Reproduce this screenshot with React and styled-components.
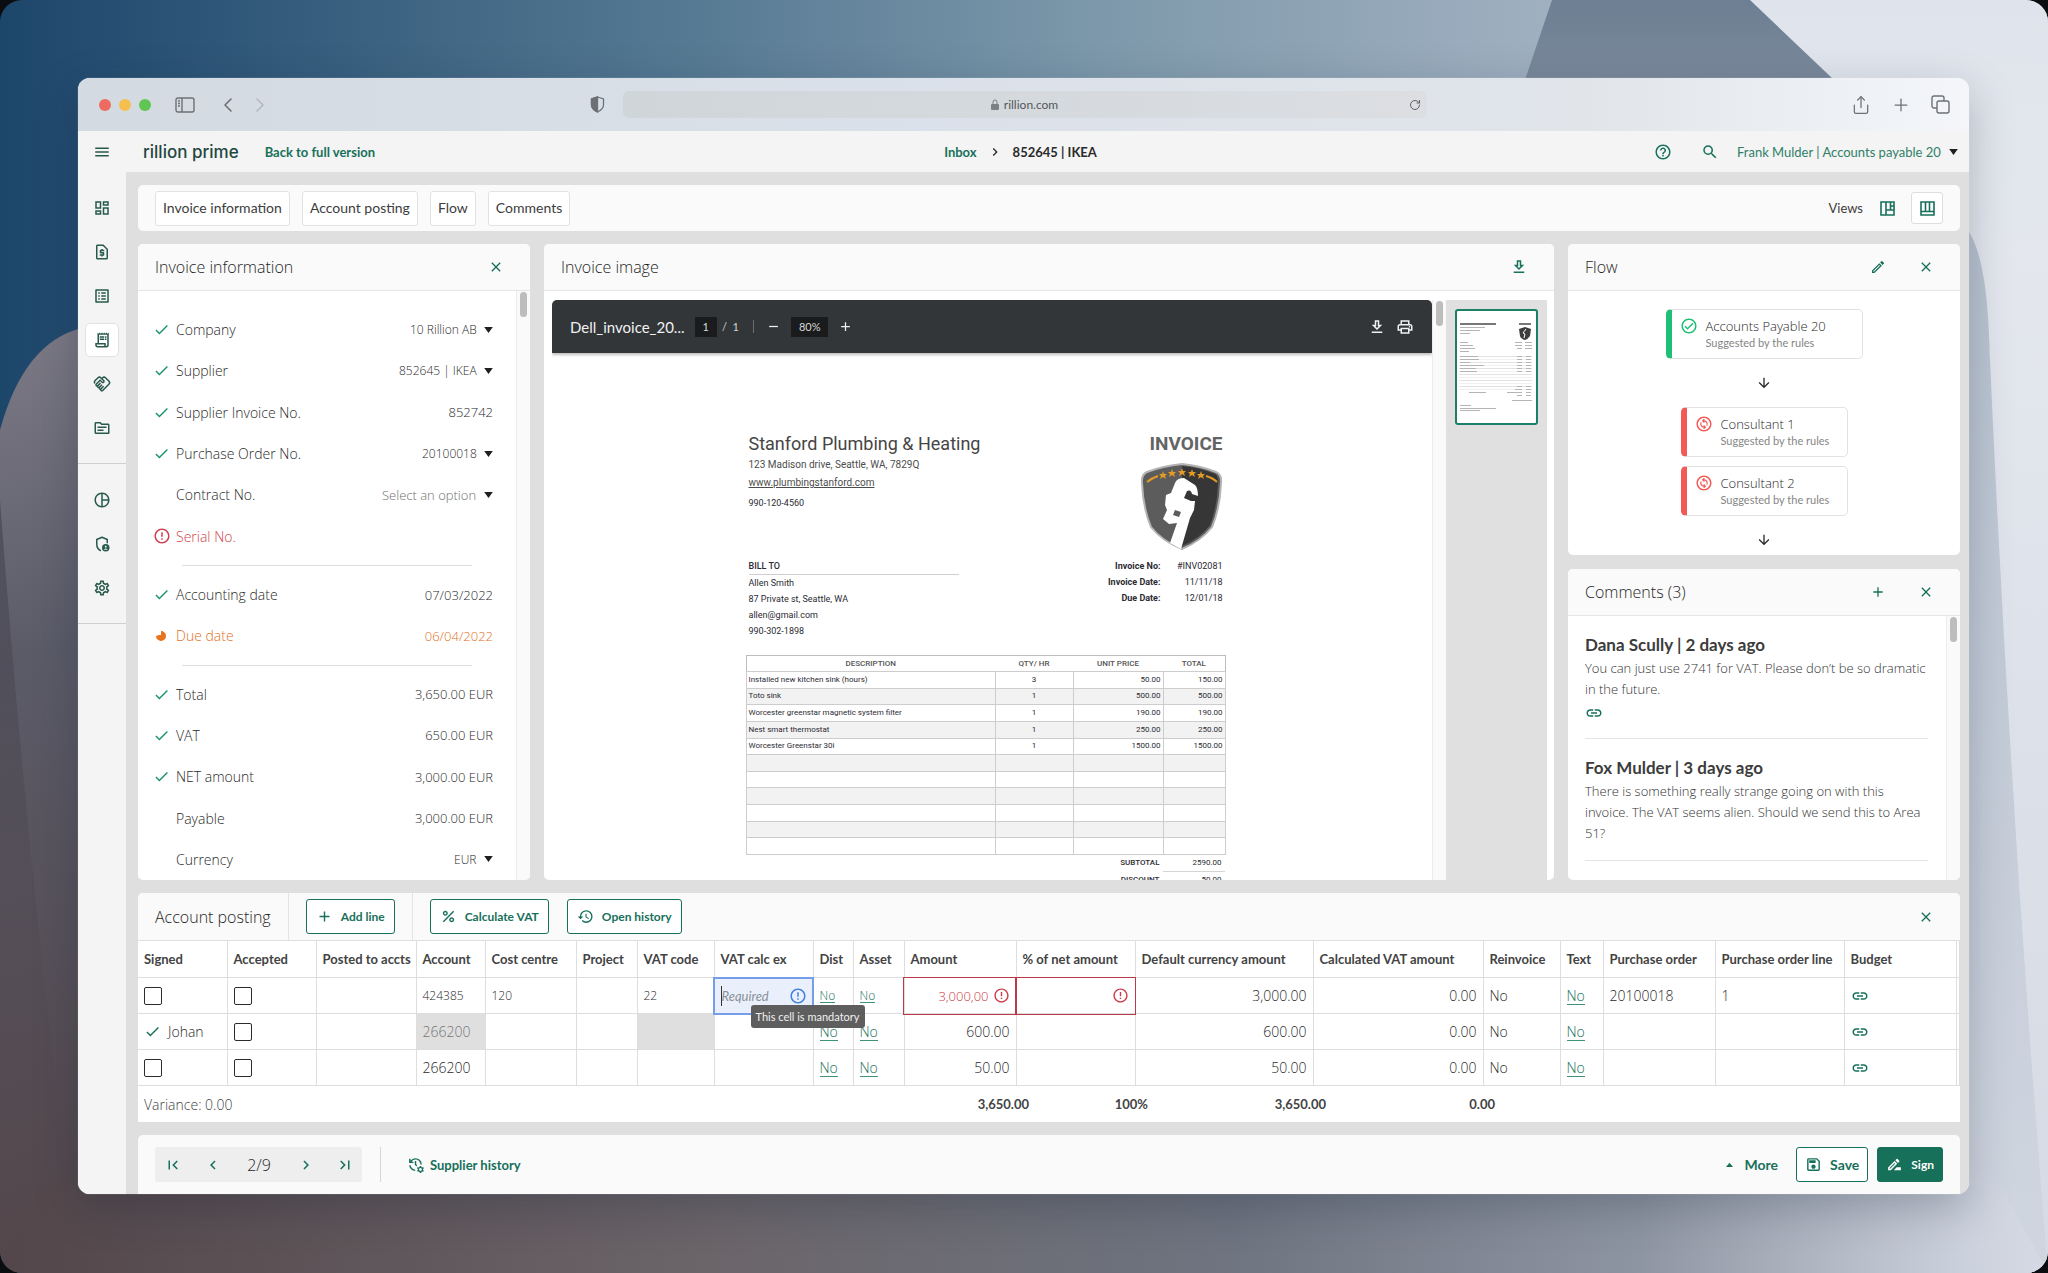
import React, { useState } from "react";
import styled, { createGlobalStyle, css } from "styled-components";
import {
  MdAdd,
  MdArrowDownward,
  MdCheck,
  MdChevronLeft,
  MdChevronRight,
  MdClose,
  MdErrorOutline,
  MdFirstPage,
  MdHelpOutline,
  MdHistory,
  MdLastPage,
  MdLink,
  MdManageHistory,
  MdMenu,
  MdOutlineChangeCircle,
  MdOutlineCheckCircle,
  MdOutlineDashboard,
  MdOutlineDownload,
  MdOutlineDriveFileRenameOutline,
  MdOutlineHandshake,
  MdOutlineListAlt,
  MdOutlineModeEdit,
  MdOutlinePrint,
  MdOutlineReceiptLong,
  MdOutlineRequestPage,
  MdOutlineSave,
  MdOutlineSettings,
  MdOutlineTopic,
  MdPercent,
  MdPieChartOutline,
  MdRemove,
  MdSearch,
} from "react-icons/md";
import { ChevronLeft, ChevronRight, Plus, RotateCw, Share } from "lucide-react";

const lato = `Lato, "Open Sans", sans-serif`;
const green = "#17705a";
const line = "#dedede";

const GlobalStyle = createGlobalStyle`
  * {
    box-sizing: border-box;
  }
  body {
    margin: 0;
    background: #0b0d10;
    color: #2a2a2a;
    font-family: "Open Sans", sans-serif;
    font-size: 14px;
    font-weight: 300;
  }
  button, input, select {
    font: inherit;
    color: inherit;
  }
  h1, h2, h3, p {
    margin: 0;
  }
  svg {
    display: block;
    flex-shrink: 0;
  }
`;

const Desktop = styled.div`
  position: relative;
  display: flex;
  height: 100vh;
  min-height: 960px;
  padding: 78px 79px 79px 78px;
  border-radius: 22px;
  overflow: hidden;
`;

const Wallpaper = styled.svg`
  position: absolute;
  inset: 0;
  width: 100%;
  height: 100%;
`;

const Browser = styled.div`
  position: relative;
  flex: 1;
  min-width: 0;
  display: flex;
  flex-direction: column;
  border-radius: 12px;
  overflow: hidden;
  background: #f4f4f4;
  box-shadow: 0 0 1px rgba(255, 255, 255, 0.8), 0 14px 44px rgba(20, 30, 50, 0.26);
`;

const TitleBar = styled.div`
  display: grid;
  grid-template-columns: 1fr 804px 1fr;
  align-items: center;
  height: 53px;
  padding: 0 19px 0 21px;
  color: #6d7074;
  background: linear-gradient(90deg, #d3dae1, #dbe1ea 45%, #e1e5ea 80%, #f4f6fa);
`;

const TitleSide = styled.div`
  display: flex;
  align-items: center;
  justify-content: ${(p) => (p.$end ? "flex-end" : "flex-start")};
  gap: ${(p) => (p.$end ? "20px" : "8px")};
`;

const Light = styled.span`
  width: 12px;
  height: 12px;
  border-radius: 50%;
  background: ${(p) => p.$color};
`;

const BareButton = styled.button`
  display: flex;
  align-items: center;
  justify-content: center;
  padding: 0;
  border: 0;
  background: none;
  color: ${(p) => p.$color || "inherit"};
  cursor: pointer;
`;

const SidebarToggle = styled(BareButton)`
  margin: 0 13px 0 16px;
`;

const Shield = styled.span`
  margin-left: auto;
  margin-right: 18px;
`;

const UrlBar = styled.div`
  display: grid;
  grid-template-columns: 1fr auto 1fr;
  align-items: center;
  height: 27px;
  padding: 0 6px;
  border-radius: 6px;
  background: linear-gradient(90deg, #cfd6d9, #d6dade 60%, #dcdee2);
  font-family: ${lato};
  font-size: 12px;
  font-weight: 400;
  line-height: 16px;
  color: #54575b;
`;

const Url = styled.span`
  grid-column: 2;
  display: flex;
  align-items: center;
  gap: 5px;
`;

const Reload = styled(BareButton)`
  justify-self: end;
`;

const TopBar = styled.header`
  display: grid;
  grid-template-columns: 1fr auto 1fr;
  align-items: center;
  height: 41px;
  padding: 0 11px 0 15px;
  background: #f4f4f4;
  font-family: ${lato};
`;

const TopGroup = styled.div`
  display: flex;
  align-items: center;
  justify-content: ${(p) => (p.$end ? "flex-end" : "flex-start")};
`;

const Brand = styled.span`
  margin: 0 26px 0 32px;
  font-family: Inter, sans-serif;
  font-size: 17px;
  font-weight: 500;
  line-height: 20px;
  color: #22473f;
`;

const StrongLink = styled.a`
  font-size: 13px;
  font-weight: 700;
  color: ${green};
  text-decoration: none;
`;

const Crumbs = styled.nav`
  display: flex;
  align-items: center;
  gap: 10px;
  padding-right: 10px;
  font-size: 13px;
  font-weight: 700;
`;

const SelectBox = styled.span`
  display: inline-flex;
  align-items: center;
  gap: 7px;
`;

const PlainSelect = styled.select`
  appearance: none;
  padding: 0;
  border: 0;
  background: none;
  font-size: ${(p) => (p.$faded ? "13px" : "12px")};
  color: ${(p) => (p.$faded ? "#707070" : "inherit")};
`;

const UserSelect = styled(SelectBox)`
  margin-left: 18px;
  select {
    font-size: 13px;
    font-weight: 400;
    color: #2f8068;
  }
`;

const HelpButton = styled(BareButton)`
  margin-right: 29px;
`;

const Main = styled.div`
  flex: 1;
  min-height: 0;
  display: flex;
`;

const SideNav = styled.nav`
  width: 48px;
  background: #f4f4f4;
`;

const NavGroup = styled.div`
  display: flex;
  flex-direction: column;
  align-items: center;
  padding: 14px 0 13px;
  border-bottom: 1px solid #cfcfcf;
`;

const NavItem = styled.button`
  display: flex;
  align-items: center;
  justify-content: center;
  width: 34px;
  height: 34px;
  margin: 5px 0;
  padding: 0;
  border: 1px solid ${(p) => (p.$active ? "#e2e2e2" : "transparent")};
  border-radius: 5px;
  background: ${(p) => (p.$active ? "#fff" : "transparent")};
  color: #27594c;
  cursor: pointer;
`;

const Content = styled.main`
  flex: 1;
  min-width: 0;
  display: flex;
  flex-direction: column;
  gap: 13px;
  padding: 13px 9px 0 12px;
  background: #dfdfdf;
`;

const Toolbar = styled.div`
  display: flex;
  align-items: center;
  gap: 12px;
  height: 46px;
  padding: 0 17px;
  border-radius: 5px;
  background: #fafafa;
  font-family: ${lato};
  font-weight: 400;
  color: #3d3d3d;
`;

const Tab = styled.button`
  height: 35px;
  padding: 0 7px;
  border: 1px solid #e2e2e2;
  border-radius: 3px;
  background: #fff;
  font-size: 14px;
  line-height: 16px;
  cursor: pointer;
`;

const Views = styled.div`
  display: flex;
  align-items: center;
  gap: 16px;
  margin-left: auto;
  font-size: 13px;
`;

const ViewButton = styled(BareButton)`
  width: ${(p) => (p.$active ? "32px" : "16px")};
  height: 32px;
  border: ${(p) => (p.$active ? "1px solid #dedede" : "0")};
  border-radius: 3px;
  background: ${(p) => (p.$active ? "#fff" : "none")};
  color: ${green};
`;

const Panels = styled.div`
  flex: 1;
  min-height: 0;
  display: grid;
  grid-template-columns: 392px minmax(0, 1fr) 392px;
  gap: 14px;
`;

const RightColumn = styled.div`
  min-height: 0;
  display: grid;
  grid-template-rows: 1fr 1fr;
  gap: 14px;
`;

const Panel = styled.section`
  min-height: 0;
  display: flex;
  flex-direction: column;
  overflow: hidden;
  border-radius: 5px;
  background: #fff;
`;

const PanelHead = styled.div`
  display: flex;
  align-items: center;
  gap: 32px;
  flex-shrink: 0;
  height: 47px;
  padding: 0 26px 0 17px;
  border-bottom: 1px solid #e6e6e6;
  background: #fafafa;
  color: ${green};
`;

const PanelTitle = styled.h2`
  margin-right: auto;
  font-size: 16px;
  font-weight: 300;
  line-height: 22px;
  color: #1f1f1f;
`;

const PanelBody = styled.div`
  flex: 1;
  min-height: 0;
  display: flex;
`;

const Track = styled.div`
  width: 14px;
  flex-shrink: 0;
  padding: 1px 3px;
  border-left: 1px solid #ececec;
  background: #fafafa;
  &::before {
    content: "";
    display: block;
    width: 7px;
    height: 25px;
    border-radius: 4px;
    background: #bdbdbd;
  }
`;

const Fields = styled.div`
  flex: 1;
  min-width: 0;
  display: flex;
  flex-direction: column;
  padding-top: 18px;
`;

const FieldRow = styled.div`
  flex: 1 1 0;
  display: flex;
  align-items: center;
  padding: 0 23px 0 15px;
  color: ${(p) => p.$color || "inherit"};
`;

const FieldState = styled.span`
  width: 23px;
  color: ${(p) => p.$color || "#17946f"};
`;

const FieldLabel = styled.label`
  flex-shrink: 0;
  font-size: 14px;
`;

const FieldInput = styled.input`
  flex: 1;
  min-width: 0;
  padding: 0;
  border: 0;
  background: none;
  font-size: 13px;
  text-align: right;
`;

const FieldSelect = styled(SelectBox)`
  margin-left: auto;
`;

const FieldRule = styled.hr`
  width: auto;
  height: 1px;
  margin: 8px 44px;
  border: 0;
  background: ${line};
`;

const Viewer = styled.div`
  flex: 1;
  min-width: 0;
  display: flex;
  padding: 9px 7px 0 8px;
`;

const Pdf = styled.div`
  flex: 1;
  min-width: 0;
  display: flex;
  flex-direction: column;
  overflow: hidden;
`;

const PdfBar = styled.div`
  display: flex;
  align-items: center;
  flex-shrink: 0;
  height: 53px;
  padding: 0 18px;
  border-radius: 5px 5px 0 0;
  background: #323639;
  box-shadow: 0 2px 3px rgba(0, 0, 0, 0.25);
  color: #f1f1f1;
  font-family: ${lato};
  font-size: 11px;
  font-weight: 400;
`;

const PdfName = styled.span`
  margin-right: 10px;
  font-size: 15px;
`;

const PdfBox = styled.span`
  padding: 0 8px;
  background: #191b1c;
  line-height: 20px;
  color: #d8d8d8;
`;

const PdfCount = styled.span`
  margin: 0 12px 0 5px;
  padding-right: 14px;
  border-right: 1px solid #6b6f72;
  color: #d0d0d0;
`;

const PdfTools = styled.div`
  display: flex;
  align-items: center;
  gap: ${(p) => p.$gap}px;
  margin-left: ${(p) => (p.$end ? "auto" : "0")};
`;

const Sheet = styled.div`
  align-self: center;
  width: 493px;
  padding: 79px 14px 0 0;
  font-family: Roboto, sans-serif;
  font-size: 9px;
  font-weight: 400;
  line-height: 16px;
  color: #2b2b33;
`;

const SheetRow = styled.div`
  display: flex;
  justify-content: space-between;
  min-height: ${(p) => p.$height}px;
  padding: 0 2px 0 3px;
`;

const SheetTitle = styled.h1`
  font-size: 18px;
  font-weight: 400;
  line-height: 24px;
  color: #454545;
`;

const SheetLine = styled.p`
  font-size: 10px;
  line-height: 18px;
  color: #4d4d4d;
`;

const SheetPhone = styled.p`
  margin-top: 3px;
  line-height: 16px;
`;

const SheetBrand = styled.div`
  display: flex;
  flex-direction: column;
  align-items: flex-end;
`;

const InvoiceWord = styled.span`
  margin-bottom: 7px;
  font-size: 19px;
  font-weight: 700;
  line-height: 24px;
  color: #646464;
`;

const BillTo = styled.div`
  width: 210px;
`;

const BillHead = styled.p`
  border-bottom: 1px solid #cfcfcf;
  font-weight: 500;
`;

const Facts = styled.dl`
  display: grid;
  grid-template-columns: auto 48px;
  column-gap: 14px;
  align-content: start;
  margin: 0;
  text-align: right;
  dt {
    font-weight: 700;
  }
  dd {
    margin: 0;
  }
`;

const LineItems = styled.table`
  width: 100%;
  height: 200px;
  table-layout: fixed;
  border-collapse: collapse;
  font-size: 8px;
  line-height: 10px;
  tr {
    height: 16px;
  }
  th {
    padding: 0 2px;
    color: #555;
    font-weight: 500;
  }
  td {
    padding: 0 2px;
    border: 1px solid #cdcdcd;
    text-align: right;
  }
  td:first-child {
    text-align: left;
  }
  td:nth-child(2) {
    text-align: center;
  }
  tbody tr:nth-child(even) {
    background: #f2f2f2;
  }
  thead tr {
    border: 1px solid #bdbdbd;
  }
`;

const Sums = styled.dl`
  display: grid;
  grid-template-columns: 1fr 62px;
  margin: 0;
  text-align: right;
  font-size: 8px;
  line-height: 16px;
  dt {
    padding-right: 3px;
    font-weight: 500;
  }
  dd {
    margin: 0;
    padding-right: 3px;
    border-bottom: 1px solid #d5d5d5;
  }
`;

const Thumbs = styled.div`
  width: 101px;
  flex-shrink: 0;
  padding: 9px;
  background: #e0e0e0;
`;

const ThumbButton = styled.button`
  display: block;
  width: 83px;
  height: 116px;
  padding: 0;
  border: 2px solid #1b8067;
  border-radius: 3px;
  background: #fff;
`;

const FlowList = styled.div`
  flex: 1;
  display: flex;
  flex-direction: column;
  align-items: center;
  padding-top: 18px;
`;

const FlowCard = styled.div`
  display: grid;
  grid-template-columns: auto 1fr;
  align-items: center;
  align-content: center;
  column-gap: 8px;
  width: ${(p) => (p.$wide ? "197px" : "167px")};
  height: 50px;
  margin-bottom: 9px;
  padding-left: 8px;
  border: 1px solid #e2e2e2;
  border-left: 6px solid ${(p) => p.$color};
  border-radius: 5px;
  svg {
    color: ${(p) => p.$color};
  }
`;

const FlowName = styled.span`
  font-size: 13px;
  line-height: 18px;
`;

const FlowHint = styled.span`
  grid-column: 2;
  font-family: ${lato};
  font-size: 11px;
  font-weight: 400;
  line-height: 16px;
  color: #858585;
`;

const FlowArrow = styled.div`
  display: flex;
  align-items: center;
  height: 30px;
  margin-bottom: 9px;
`;

const CommentList = styled.div`
  flex: 1;
  padding: 0 18px 0 17px;
`;

const Comment = styled.article`
  padding: 17px 0 16px;
  border-bottom: 1px solid #e4e4e4;
`;

const CommentHead = styled.h3`
  font-family: ${lato};
  font-size: 17px;
  font-weight: 700;
  line-height: 24px;
  color: #3c3c3c;
`;

const CommentText = styled.p`
  padding-top: 1px;
  font-size: 13px;
  line-height: 21px;
  color: #333;
`;

const Attachment = styled.a`
  display: flex;
  width: max-content;
  margin-top: 3px;
  padding-top: 1px;
  color: ${green};
`;

const Posting = styled.section`
  border-radius: 5px 5px 0 0;
  background: #fff;
`;

const PostingHead = styled.div`
  display: flex;
  height: 47px;
  padding-right: 26px;
  border-radius: 5px 5px 0 0;
  background: #fafafa;
  color: ${green};
`;

const PostingPart = styled.div`
  display: flex;
  align-items: center;
  gap: 18px;
  padding: 0 17px;
  border-right: ${(p) => (p.$last ? "0" : "1px solid #e4e4e4")};
`;

const OutlineButton = styled.button`
  display: flex;
  align-items: center;
  gap: 8px;
  height: 35px;
  padding: 0 8px;
  border: 1px solid ${green};
  border-radius: 3px;
  background: ${(p) => (p.$filled ? green : "#fff")};
  color: ${(p) => (p.$filled ? "#fff" : green)};
  font-family: ${lato};
  font-size: 12px;
  font-weight: 700;
  cursor: pointer;
`;

const PostingButton = styled(OutlineButton)`
  padding: 0 9px;
`;

const PostingClose = styled(BareButton)`
  margin-left: auto;
`;

const Grid = styled.table`
  width: 100%;
  table-layout: fixed;
  border-collapse: collapse;
  th {
    height: 37px;
    padding: 0 0 0 6px;
    border: 1px solid ${line};
    border-left: 0;
    font-family: ${lato};
    font-size: 13px;
    font-weight: 700;
    text-align: left;
    white-space: nowrap;
    color: #434343;
  }
`;

const GridCell = styled.td`
  position: relative;
  height: 36px;
  padding: 0 6px;
  border: 1px solid ${line};
  border-left: 0;
  font-size: ${(p) => (p.$small ? "12px" : "14px")};
  line-height: 18px;
  color: ${(p) => (p.$muted ? "#777" : "inherit")};
  text-align: ${(p) => (p.$right ? "right" : "left")};
  background: ${(p) => (p.$muted ? "#dfdfdf" : "none")};
  ${(p) =>
    p.$state === "error" &&
    css`
      color: #cc3a47;
      font-size: 13px;
      outline: 1px solid #b93b4a;
    `}
  ${(p) =>
    p.$state === "active" &&
    css`
      background: #e9f0fb;
      color: #3f7fe0;
      outline: 2px solid #759de8;
      outline-offset: -1px;
      z-index: 1;
    `}
`;

const CellLine = styled.span`
  display: flex;
  align-items: center;
  justify-content: ${(p) => (p.$end ? "flex-end" : "flex-start")};
  gap: ${(p) => p.$gap || 4}px;
`;

const RequiredInput = styled.input`
  flex: 1;
  min-width: 0;
  height: 20px;
  padding: 0;
  border: 0;
  border-left: 1px solid #333;
  background: none;
  font-family: ${lato};
  font-size: 13px;
  font-style: italic;
  font-weight: 400;
  &::placeholder {
    color: #8a8f96;
  }
`;

const Tooltip = styled.span`
  position: absolute;
  top: 27px;
  left: 36px;
  z-index: 2;
  padding: 0 5px;
  border-radius: 3px;
  background: #5e5e5e;
  color: #f0f0f0;
  font-family: ${lato};
  font-size: 11px;
  font-weight: 400;
  line-height: 23px;
  white-space: nowrap;
`;

const CellLink = styled.a`
  display: inline-block;
  border-bottom: 1px solid #3d937a;
  color: ${green};
  line-height: ${(p) => (p.$small ? "13px" : "16px")};
  text-decoration: none;
`;

const Check = styled.input`
  display: block;
  appearance: none;
  width: 18px;
  height: 18px;
  margin: 0;
  border: 1px solid #2c2c2c;
  border-radius: 2px;
  background: #fff;
  &:checked {
    background: ${green};
  }
`;

const TotalRow = styled.div`
  display: grid;
  grid-template-columns: 1fr 119px 178px 169px 465px;
  align-items: center;
  height: 36px;
  padding-left: 6px;
  font-family: ${lato};
  font-size: 13px;
  font-weight: 700;
  text-align: right;
  color: #434343;
`;

const FirstTotal = styled.span`
  display: flex;
  align-items: center;
  justify-content: space-between;
`;

const Variance = styled.span`
  font-family: "Open Sans", sans-serif;
  font-size: 14px;
  font-weight: 300;
`;

const Footer = styled.footer`
  display: flex;
  align-items: flex-start;
  height: 59px;
  padding: 12px 17px;
  border-radius: 5px 5px 0 0;
  background: #fafafa;
`;

const Pager = styled.div`
  display: grid;
  grid-template-columns: 36px 43px 50px 44px 34px;
  height: 35px;
  border-radius: 3px;
  background: #eee;
  color: ${green};
`;

const PageNo = styled.span`
  align-self: center;
  font-size: 16px;
  line-height: 20px;
  text-align: center;
  color: #1f1f1f;
`;

const FooterRule = styled.span`
  width: 1px;
  height: 35px;
  margin: 0 26px 0 18px;
  background: #d6d6d6;
`;

const GhostButton = styled(OutlineButton)`
  gap: ${(p) => p.$gap}px;
  padding: 0;
  border: 0;
  background: none;
  font-size: ${(p) => (p.$large ? "14px" : "13px")};
`;

const FooterEnd = styled.div`
  display: flex;
  gap: 9px;
  margin-left: auto;
`;

const SaveButton = styled(OutlineButton)`
  font-size: 14px;
`;

const MoreButton = styled(GhostButton)`
  margin-right: 9px;
`;

function Caret({ up, color = "#1f1f1f", size = 9 }) {
  return (
    <svg width={size} height={Math.round(size * 0.7)} viewBox="0 0 10 7" fill={color}>
      <path d={up ? "M0 7h10L5 1z" : "M0 0h10L5 7z"} />
    </svg>
  );
}

function ShieldPersonIcon({ size }) {
  return (
    <svg width={size} height={size} viewBox="0 0 24 24" fill="none" stroke="currentColor" strokeWidth="2">
      <path d="M10.500 21C7 19.500 5 16 5 12V6l7-3 7 3v5" strokeLinejoin="round" />
      <circle cx="17" cy="17" r="5" fill="currentColor" stroke="none" />
      <circle cx="17" cy="15.500" r="1.300" fill="#f4f4f4" stroke="none" />
      <path d="M14.500 19.500q2.500-3 5 0z" fill="#f4f4f4" stroke="none" />
    </svg>
  );
}

function Backdrop() {
  return (
    <Wallpaper viewBox="0 0 2048 1273" preserveAspectRatio="none" aria-hidden="true">
      <defs>
        <linearGradient id="sky" x1="0" x2="1" y1="0" y2="0">
          <stop offset="0" stopColor="#1d466b" />
          <stop offset="0.3" stopColor="#4f748f" />
          <stop offset="0.55" stopColor="#7f9aac" />
          <stop offset="0.75" stopColor="#9fafc0" />
          <stop offset="1" stopColor="#c5cedb" />
        </linearGradient>
        <linearGradient id="hill" x1="0" x2="0.1" y1="0" y2="1">
          <stop offset="0" stopColor="#7c7a86" />
          <stop offset="0.35" stopColor="#5b5b68" />
          <stop offset="1" stopColor="#53464a" />
        </linearGradient>
        <linearGradient id="ground" x1="0" x2="1" y1="0" y2="0">
          <stop offset="0" stopColor="#53464a" />
          <stop offset="0.35" stopColor="#6b656a" />
          <stop offset="0.6" stopColor="#6e7480" />
          <stop offset="0.8" stopColor="#8e95a2" />
          <stop offset="0.96" stopColor="#ccd2dd" />
          <stop offset="1" stopColor="#d5dae4" />
        </linearGradient>
        <linearGradient id="ridge" x1="0" x2="0" y1="0" y2="1">
          <stop offset="0" stopColor="#6e7f93" />
          <stop offset="1" stopColor="#8490a2" />
        </linearGradient>
        <linearGradient id="snow" x1="0" x2="0" y1="0" y2="1">
          <stop offset="0" stopColor="#dfe4ec" />
          <stop offset="0.2" stopColor="#e4e7ee" />
          <stop offset="1" stopColor="#d5dae4" />
        </linearGradient>
        <linearGradient id="slope" x1="0" x2="0" y1="0" y2="1">
          <stop offset="0" stopColor="#b9c3d1" />
          <stop offset="1" stopColor="#d0d6e0" />
        </linearGradient>
        <linearGradient id="shade" x1="0" x2="0" y1="0" y2="1">
          <stop offset="0" stopColor="#454551" stopOpacity="0.7" />
          <stop offset="1" stopColor="#53464a" stopOpacity="0" />
        </linearGradient>
      </defs>
      <rect width="2048" height="1273" fill="url(#sky)" />
      <path d="M1600 0h448v1273h-448z" fill="url(#snow)" />
      <path d="M1552 0h198l83 79v60h-328z" fill="url(#ridge)" />
      <path d="M1960 220c20 20 28 60 30 140q20 450 58 913h-88z" fill="url(#slope)" />
      <path d="M0 1273V430Q24 342 82 328L400 420V1273z" fill="url(#hill)" />
      <path d="M0 500Q30 900 80 1273H0z" fill="url(#shade)" />
      <path d="M40 1185H2000L2048 1273H0z" fill="url(#ground)" />
    </Wallpaper>
  );
}

function Emblem() {
  return (
    <svg width="82" height="87" viewBox="0 0 82 87">
      <path d="M41 1Q60 3 75 9 81 12 80 20 79 45 71 64 60 78 41 86 21 78 10 64 2 45 1 20 0 12 6 9 22 3 41 1z" fill="#5c5c5c" stroke="#b4b4b4" strokeWidth="2" />
      <path d="M41 3Q60 5 74 11 78 14 77 21 76 45 69 62 58 76 41 83z" fill="#363636" />
      <g fill="none" stroke="#e39a27" strokeWidth="2">
        <path d="M6 19q5-4 11-6M65 13q7 2 11 6" />
      </g>
      <g fill="#e39a27">
        {[[22, 12], [31, 10], [41, 9], [51, 10], [60, 12]].map(([x, y]) => (
          <path key={x} transform={`translate(${x} ${y})`} d="M0-4 1-1 4-1 2 1 3 4 0 2-3 4-2 1-4-1-1-1z" />
        ))}
      </g>
      <path
        fillRule="evenodd"
        fill="#fff"
        d="M34 20Q36 15 43 15L54 22Q57 25 57 33L51 31Q50 26 46 28L43 35 50 38 54 38 53 47 49 55 40 86 29 80 36 60 28 61 22 56 26 47 24 42 25 32 30 30zM34 47l-2 5 6 2 2-5z"
      />
    </svg>
  );
}

function PageThumb() {
  const rows = Array.from({ length: 12 }, (_, i) => i);
  return (
    <svg width="79" height="112" viewBox="0 0 79 112" fill="#b4b4b4">
      <path d="M3 12h36v2H3zM62 12h12v2H62z" fill="#777" />
      <path d="M3 16h25v1H3zM3 19h20v1H3zM3 22h10v1H3zM3 31h8v1H3zM3 34h13v1H3zM3 37h15v1H3zM3 40h9v1H3zM58 31h7v1h-7zM68 31h7v1h-7zM58 34h7v1h-7zM68 34h7v1h-7zM60 37h5v1h-5zM68 37h7v1h-7z" />
      <path d="M68 16l6 2-1 7q-2 3-5 4-4-1-5-4l-1-7z" fill="#3c3c3c" />
      <path d="M69 18l-3 4 2 1-1 4" fill="none" stroke="#fff" />
      {rows.map((i) => (
        <g key={i}>
          <path d={`M2 ${45 + i * 3}h73v1H2z`} fill={i % 2 ? "#f1f1f1" : "#e2e2e2"} />
          {i < 6 && <path d={`M3 ${45 + i * 3}h${[18, 19, 10, 24, 16, 17][i]}v1H3zM60 ${45 + i * 3}h5v1h-5zM69 ${45 + i * 3}h5v1h-5z`} />}
        </g>
      ))}
      <path d="M60 75h5v1h-5zM69 75h5v1h-5zM58 78h7v1h-7zM69 78h5v1h-5zM12 81h17v1H12zM50 81h15v1H50zM69 81h5v1h-5zM60 84h5v1h-5zM69 84h5v1h-5zM55 89h20v1H55zM3 94h11v1H3zM3 97h36v1H3zM3 99h20v1H3z" />
    </svg>
  );
}

const navMain = [
  ["Dashboard", MdOutlineDashboard],
  ["Invoices", MdOutlineRequestPage],
  ["Lists", MdOutlineListAlt],
  ["Inbox", MdOutlineReceiptLong],
  ["Contracts", MdOutlineHandshake],
  ["Archive", MdOutlineTopic],
];
const navExtra = [
  ["Reports", MdPieChartOutline],
  ["Administration", ShieldPersonIcon],
  ["Settings", MdOutlineSettings],
];

const fields = [
  { label: "Company", value: "10 Rillion AB", select: true, state: "ok" },
  { label: "Supplier", value: "852645 | IKEA", select: true, state: "ok" },
  { label: "Supplier Invoice No.", value: "852742", state: "ok" },
  { label: "Purchase Order No.", value: "20100018", select: true, state: "ok" },
  { label: "Contract No.", value: "Select an option", select: true, faded: true },
  { label: "Serial No.", value: "", state: "error" },
  null,
  { label: "Accounting date", value: "07/03/2022", state: "ok" },
  { label: "Due date", value: "06/04/2022", state: "due" },
  null,
  { label: "Total", value: "3,650.00 EUR", state: "ok" },
  { label: "VAT", value: "650.00 EUR", state: "ok" },
  { label: "NET amount", value: "3,000.00 EUR", state: "ok" },
  { label: "Payable", value: "3,000.00 EUR" },
  { label: "Currency", value: "EUR", select: true },
];

const stateColors = { error: "#cf3f4d", due: "#e2701c" };

function Field({ field }) {
  const id = field.label.toLowerCase().replace(/[^a-z]+/g, "-");
  const color = stateColors[field.state];
  return (
    <FieldRow $color={color}>
      <FieldState $color={color}>
        {field.state === "ok" && <MdCheck size={17} />}
        {field.state === "error" && <MdErrorOutline size={18} />}
        {field.state === "due" && (
          <svg width="17" height="14" viewBox="0 0 17 14" fill="#e8731f">
            <path d="M8 2a5 5 0 1 1-5 5l3-1 2 0z" />
          </svg>
        )}
      </FieldState>
      <FieldLabel htmlFor={id}>{field.label}</FieldLabel>
      {field.select ? (
        <FieldSelect>
          <PlainSelect id={id} $faded={field.faded}>
            <option>{field.value}</option>
          </PlainSelect>
          <Caret />
        </FieldSelect>
      ) : (
        <FieldInput id={id} defaultValue={field.value} />
      )}
    </FieldRow>
  );
}

const items = [
  ["Installed new kitchen sink (hours)", "3", "50.00", "150.00"],
  ["Toto sink", "1", "500.00", "500.00"],
  ["Worcester greenstar magnetic system filter", "1", "190.00", "190.00"],
  ["Nest smart thermostat", "1", "250.00", "250.00"],
  ["Worcester Greenstar 30i", "1", "1500.00", "1500.00"],
  ...Array.from({ length: 6 }, () => ["", "", "", ""]),
];

function InvoiceSheet() {
  return (
    <Sheet>
      <SheetRow $height={126}>
        <div>
          <SheetTitle>Stanford Plumbing &amp; Heating</SheetTitle>
          <SheetLine>123 Madison drive, Seattle, WA, 7829Q</SheetLine>
          <SheetLine>
            <u>www.plumbingstanford.com</u>
          </SheetLine>
          <SheetPhone>990-120-4560</SheetPhone>
        </div>
        <SheetBrand>
          <InvoiceWord>INVOICE</InvoiceWord>
          <Emblem />
        </SheetBrand>
      </SheetRow>
      <SheetRow $height={97}>
        <BillTo>
          <BillHead>BILL TO</BillHead>
          <p>Allen Smith</p>
          <p>87 Private st, Seattle, WA</p>
          <p>allen@gmail.com</p>
          <p>990-302-1898</p>
        </BillTo>
        <Facts>
          <dt>Invoice No:</dt>
          <dd>#INV02081</dd>
          <dt>Invoice Date:</dt>
          <dd>11/11/18</dd>
          <dt>Due Date:</dt>
          <dd>12/01/18</dd>
        </Facts>
      </SheetRow>
      <LineItems>
        <colgroup>
          <col width="249" />
          <col width="78" />
          <col width="90" />
          <col width="62" />
        </colgroup>
        <thead>
          <tr>
            <th>DESCRIPTION</th>
            <th>QTY/ HR</th>
            <th>UNIT PRICE</th>
            <th>TOTAL</th>
          </tr>
        </thead>
        <tbody>
          {items.map((row, i) => (
            <tr key={i}>
              {row.map((cell, j) => (
                <td key={j}>{cell}</td>
              ))}
            </tr>
          ))}
        </tbody>
      </LineItems>
      <Sums>
        <dt>SUBTOTAL</dt>
        <dd>2590.00</dd>
        <dt>DISCOUNT</dt>
        <dd>50.00</dd>
      </Sums>
    </Sheet>
  );
}

const columns = [
  ["Signed", 89],
  ["Accepted", 89],
  ["Posted to accts", 100],
  ["Account", 69],
  ["Cost centre", 91],
  ["Project", 61],
  ["VAT code", 77],
  ["VAT calc ex", 99],
  ["Dist", 40],
  ["Asset", 51],
  ["Amount", 112],
  ["% of net amount", 119],
  ["Default currency amount", 178],
  ["Calculated VAT amount", 170],
  ["Reinvoice", 77],
  ["Text", 43],
  ["Purchase order", 112],
  ["Purchase order line", 129],
  ["Budget", 112],
];

const lines = [
  { account: "424385", cost: "120", vat: "22", amount: "3,000,00", base: "3,000.00", order: "20100018", orderLine: "1", invalid: true },
  { signed: "Johan", account: "266200", locked: true, amount: "600.00", base: "600.00" },
  { account: "266200", amount: "50.00", base: "50.00" },
];

function PostingLine({ row, index }) {
  const error = row.invalid ? "error" : undefined;
  return (
    <tr>
      <GridCell>
        {row.signed ? (
          <CellLine $gap={7}>
            <MdCheck size={17} color={green} />
            {row.signed}
          </CellLine>
        ) : (
          <Check type="checkbox" aria-label={`Signed, line ${index + 1}`} />
        )}
      </GridCell>
      <GridCell>
        <Check type="checkbox" aria-label={`Accepted, line ${index + 1}`} />
      </GridCell>
      <GridCell />
      <GridCell $small={row.invalid} $muted={row.locked}>{row.account}</GridCell>
      <GridCell $small={row.invalid}>{row.cost}</GridCell>
      <GridCell />
      <GridCell $small={row.invalid} $muted={row.locked}>{row.vat}</GridCell>
      {row.invalid ? (
        <GridCell $state="active">
          <CellLine>
            <RequiredInput placeholder="Required" aria-label="VAT calc ex" />
            <MdErrorOutline size={18} />
          </CellLine>
          <Tooltip role="tooltip">This cell is mandatory</Tooltip>
        </GridCell>
      ) : (
        <GridCell />
      )}
      <GridCell $small={row.invalid}>
        <CellLink href="#dist" $small={row.invalid}>No</CellLink>
      </GridCell>
      <GridCell $small={row.invalid}>
        <CellLink href="#asset" $small={row.invalid}>No</CellLink>
      </GridCell>
      <GridCell $right $state={error}>
        <CellLine $end>
          {row.amount}
          {error && <MdErrorOutline size={17} />}
        </CellLine>
      </GridCell>
      <GridCell $right $state={error}>
        <CellLine $end>{error && <MdErrorOutline size={17} />}</CellLine>
      </GridCell>
      <GridCell $right>{row.base}</GridCell>
      <GridCell $right>0.00</GridCell>
      <GridCell>No</GridCell>
      <GridCell>
        <CellLink href="#text">No</CellLink>
      </GridCell>
      <GridCell>{row.order}</GridCell>
      <GridCell>{row.orderLine}</GridCell>
      <GridCell>
        <BareButton $color={green} aria-label="Budget link">
          <MdLink size={18} />
        </BareButton>
      </GridCell>
      <GridCell />
    </tr>
  );
}

export default function App() {
  const [nav, setNav] = useState("Inbox");

  const renderNav = ([name, Icon]) => (
    <NavItem key={name} $active={nav === name} aria-label={name} onClick={() => setNav(name)}>
      <Icon size={18} />
    </NavItem>
  );

  return (
    <Desktop>
      <GlobalStyle />
      <Backdrop />
      <Browser>
        <TitleBar>
          <TitleSide>
            <Light $color="#ed6b60" />
            <Light $color="#f5bf4f" />
            <Light $color="#61c554" />
            <SidebarToggle aria-label="Sidebar">
              <svg width="20" height="16" viewBox="0 0 20 16" fill="none" stroke="currentColor" strokeWidth="1.4">
                <rect x="1" y="1" width="18" height="14" rx="2" />
                <path d="M7 1v14M3 4h2M3 6.500h2M3 9h2" />
              </svg>
            </SidebarToggle>
            <BareButton aria-label="Back">
              <ChevronLeft size={24} strokeWidth={1.6} />
            </BareButton>
            <BareButton aria-label="Forward" $color="#b4b9bf">
              <ChevronRight size={24} strokeWidth={1.6} />
            </BareButton>
            <Shield>
              <svg width="15" height="17" viewBox="0 0 15 17" fill="none" stroke="currentColor" strokeWidth="1.3">
                <path d="M7.500 1 13.500 3v6q0 4-6 7-6-3-6-7V3z" />
                <path d="M7.500 1v15q-6-3-6-7V3z" fill="currentColor" />
              </svg>
            </Shield>
          </TitleSide>
          <UrlBar>
            <Url>
              <svg width="8" height="11" viewBox="0 0 8 11" fill="#7c8084">
                <rect y="5" width="8" height="6" rx="1" />
                <path d="M2 5V3a2 2 0 0 1 4 0v2" fill="none" stroke="#7c8084" />
              </svg>
              rillion.com
            </Url>
            <Reload aria-label="Reload">
              <RotateCw size={12} strokeWidth={1.8} />
            </Reload>
          </UrlBar>
          <TitleSide $end>
            <BareButton aria-label="Share">
              <Share size={20} strokeWidth={1.5} />
            </BareButton>
            <BareButton aria-label="New tab">
              <Plus size={20} strokeWidth={1.5} />
            </BareButton>
            <BareButton aria-label="Tabs">
              <svg width="19" height="19" viewBox="0 0 19 19" fill="none" stroke="currentColor" strokeWidth="1.4">
                <rect x="6" y="6" width="12" height="12" rx="2" />
                <path d="M6 13H3a2 2 0 0 1-2-2V3a2 2 0 0 1 2-2h8a2 2 0 0 1 2 2v3" />
              </svg>
            </BareButton>
          </TitleSide>
        </TitleBar>

        <TopBar>
          <TopGroup>
            <BareButton aria-label="Menu" $color="#27594c">
              <MdMenu size={18} />
            </BareButton>
            <Brand>rillion prime</Brand>
            <StrongLink href="#full">Back to full version</StrongLink>
          </TopGroup>
          <Crumbs>
            <StrongLink href="#inbox">Inbox</StrongLink>
            <MdChevronRight size={16} />
            <span>852645 | IKEA</span>
          </Crumbs>
          <TopGroup $end>
            <HelpButton aria-label="Help" $color={green}>
              <MdHelpOutline size={18} />
            </HelpButton>
            <BareButton aria-label="Search" $color={green}>
              <MdSearch size={18} />
            </BareButton>
            <UserSelect>
              <PlainSelect aria-label="User">
                <option>Frank Mulder | Accounts payable 20</option>
              </PlainSelect>
              <Caret />
            </UserSelect>
          </TopGroup>
        </TopBar>

        <Main>
          <SideNav>
            <NavGroup>{navMain.map(renderNav)}</NavGroup>
            <NavGroup>{navExtra.map(renderNav)}</NavGroup>
          </SideNav>

          <Content>
            <Toolbar>
              <Tab>Invoice information</Tab>
              <Tab>Account posting</Tab>
              <Tab>Flow</Tab>
              <Tab>Comments</Tab>
              <Views>
                Views
                <ViewButton aria-label="Column view">
                  <svg width="15" height="15" viewBox="0 0 15 15" fill="none" stroke="currentColor" strokeWidth="1.6">
                    <path d="M1 1h13v13H1zM6 1v13M10.500 1v8M6 9h8M10.500 5H14" />
                  </svg>
                </ViewButton>
                <ViewButton $active aria-label="Row view">
                  <svg width="15" height="15" viewBox="0 0 15 15" fill="none" stroke="currentColor" strokeWidth="1.6">
                    <path d="M1 1h13v13H1zM1 10.500h13M5.500 1v9.500M9.500 1v9.500" />
                  </svg>
                </ViewButton>
              </Views>
            </Toolbar>

            <Panels>
              <Panel>
                <PanelHead>
                  <PanelTitle>Invoice information</PanelTitle>
                  <BareButton aria-label="Close invoice information">
                    <MdClose size={16} />
                  </BareButton>
                </PanelHead>
                <PanelBody>
                  <Fields>{fields.map((f, i) => (f ? <Field key={i} field={f} /> : <FieldRule key={i} />))}</Fields>
                  <Track />
                </PanelBody>
              </Panel>

              <Panel>
                <PanelHead>
                  <PanelTitle>Invoice image</PanelTitle>
                  <BareButton aria-label="Download">
                    <MdOutlineDownload size={18} />
                  </BareButton>
                </PanelHead>
                <PanelBody>
                  <Viewer>
                    <Pdf>
                      <PdfBar>
                        <PdfName>Dell_invoice_20...</PdfName>
                        <PdfBox>1</PdfBox>
                        <PdfCount>/ &nbsp;1</PdfCount>
                        <PdfTools $gap={10}>
                          <BareButton aria-label="Zoom out">
                            <MdRemove size={15} />
                          </BareButton>
                          <PdfBox>80%</PdfBox>
                          <BareButton aria-label="Zoom in">
                            <MdAdd size={15} />
                          </BareButton>
                        </PdfTools>
                        <PdfTools $end $gap={10}>
                          <BareButton aria-label="Download file">
                            <MdOutlineDownload size={18} />
                          </BareButton>
                          <BareButton aria-label="Print">
                            <MdOutlinePrint size={18} />
                          </BareButton>
                        </PdfTools>
                      </PdfBar>
                      <InvoiceSheet />
                    </Pdf>
                    <Track />
                    <Thumbs>
                      <ThumbButton aria-label="Page 1">
                        <PageThumb />
                      </ThumbButton>
                    </Thumbs>
                  </Viewer>
                </PanelBody>
              </Panel>

              <RightColumn>
                <Panel>
                  <PanelHead>
                    <PanelTitle>Flow</PanelTitle>
                    <BareButton aria-label="Edit flow">
                      <MdOutlineModeEdit size={16} />
                    </BareButton>
                    <BareButton aria-label="Close flow">
                      <MdClose size={16} />
                    </BareButton>
                  </PanelHead>
                  <FlowList>
                    <FlowCard $wide $color="#1fbf75">
                      <MdOutlineCheckCircle size={18} />
                      <FlowName>Accounts Payable 20</FlowName>
                      <FlowHint>Suggested by the rules</FlowHint>
                    </FlowCard>
                    <FlowArrow>
                      <MdArrowDownward size={16} />
                    </FlowArrow>
                    <FlowCard $color="#f15a55">
                      <MdOutlineChangeCircle size={18} />
                      <FlowName>Consultant 1</FlowName>
                      <FlowHint>Suggested by the rules</FlowHint>
                    </FlowCard>
                    <FlowCard $color="#f15a55">
                      <MdOutlineChangeCircle size={18} />
                      <FlowName>Consultant 2</FlowName>
                      <FlowHint>Suggested by the rules</FlowHint>
                    </FlowCard>
                    <FlowArrow>
                      <MdArrowDownward size={16} />
                    </FlowArrow>
                  </FlowList>
                </Panel>

                <Panel>
                  <PanelHead>
                    <PanelTitle>Comments (3)</PanelTitle>
                    <BareButton aria-label="Add comment">
                      <MdAdd size={16} />
                    </BareButton>
                    <BareButton aria-label="Close comments">
                      <MdClose size={16} />
                    </BareButton>
                  </PanelHead>
                  <PanelBody>
                    <CommentList>
                      <Comment>
                        <CommentHead>Dana Scully | 2 days ago</CommentHead>
                        <CommentText>You can just use 2741 for VAT. Please don’t be so dramatic in the future.</CommentText>
                        <Attachment href="#attachment" aria-label="Attachment">
                          <MdLink size={18} />
                        </Attachment>
                      </Comment>
                      <Comment>
                        <CommentHead>Fox Mulder | 3 days ago</CommentHead>
                        <CommentText>
                          There is something really strange going on with this invoice. The VAT seems alien. Should we send this to Area 51?
                        </CommentText>
                      </Comment>
                    </CommentList>
                    <Track />
                  </PanelBody>
                </Panel>
              </RightColumn>
            </Panels>

            <Posting>
              <PostingHead>
                <PostingPart>
                  <PanelTitle>Account posting</PanelTitle>
                </PostingPart>
                <PostingPart>
                  <PostingButton>
                    <MdAdd size={17} />
                    Add line
                  </PostingButton>
                </PostingPart>
                <PostingPart $last>
                  <PostingButton>
                    <MdPercent size={17} />
                    Calculate VAT
                  </PostingButton>
                  <PostingButton>
                    <MdHistory size={17} />
                    Open history
                  </PostingButton>
                </PostingPart>
                <PostingClose aria-label="Close account posting">
                  <MdClose size={16} />
                </PostingClose>
              </PostingHead>
              <Grid>
                <colgroup>
                  {columns.map(([name, width]) => (
                    <col key={name} width={width} />
                  ))}
                  <col />
                </colgroup>
                <thead>
                  <tr>
                    {columns.map(([name]) => (
                      <th key={name}>{name}</th>
                    ))}
                    <th aria-label="More columns" />
                  </tr>
                </thead>
                <tbody>
                  {lines.map((row, i) => (
                    <PostingLine key={i} row={row} index={i} />
                  ))}
                </tbody>
              </Grid>
              <TotalRow>
                <FirstTotal>
                  <Variance>Variance: 0.00</Variance>
                  3,650.00
                </FirstTotal>
                <span>100%</span>
                <span>3,650.00</span>
                <span>0.00</span>
              </TotalRow>
            </Posting>

            <Footer>
              <Pager>
                <BareButton aria-label="First page">
                  <MdFirstPage size={18} />
                </BareButton>
                <BareButton aria-label="Previous page">
                  <MdChevronLeft size={18} />
                </BareButton>
                <PageNo>2/9</PageNo>
                <BareButton aria-label="Next page">
                  <MdChevronRight size={18} />
                </BareButton>
                <BareButton aria-label="Last page">
                  <MdLastPage size={18} />
                </BareButton>
              </Pager>
              <FooterRule />
              <GhostButton $gap={6}>
                <MdManageHistory size={17} />
                Supplier history
              </GhostButton>
              <FooterEnd>
                <MoreButton $gap={12} $large>
                  <Caret up color={green} size={7} />
                  More
                </MoreButton>
                <SaveButton>
                  <MdOutlineSave size={17} />
                  Save
                </SaveButton>
                <OutlineButton $filled>
                  <MdOutlineDriveFileRenameOutline size={17} />
                  Sign
                </OutlineButton>
              </FooterEnd>
            </Footer>
          </Content>
        </Main>
      </Browser>
    </Desktop>
  );
}
